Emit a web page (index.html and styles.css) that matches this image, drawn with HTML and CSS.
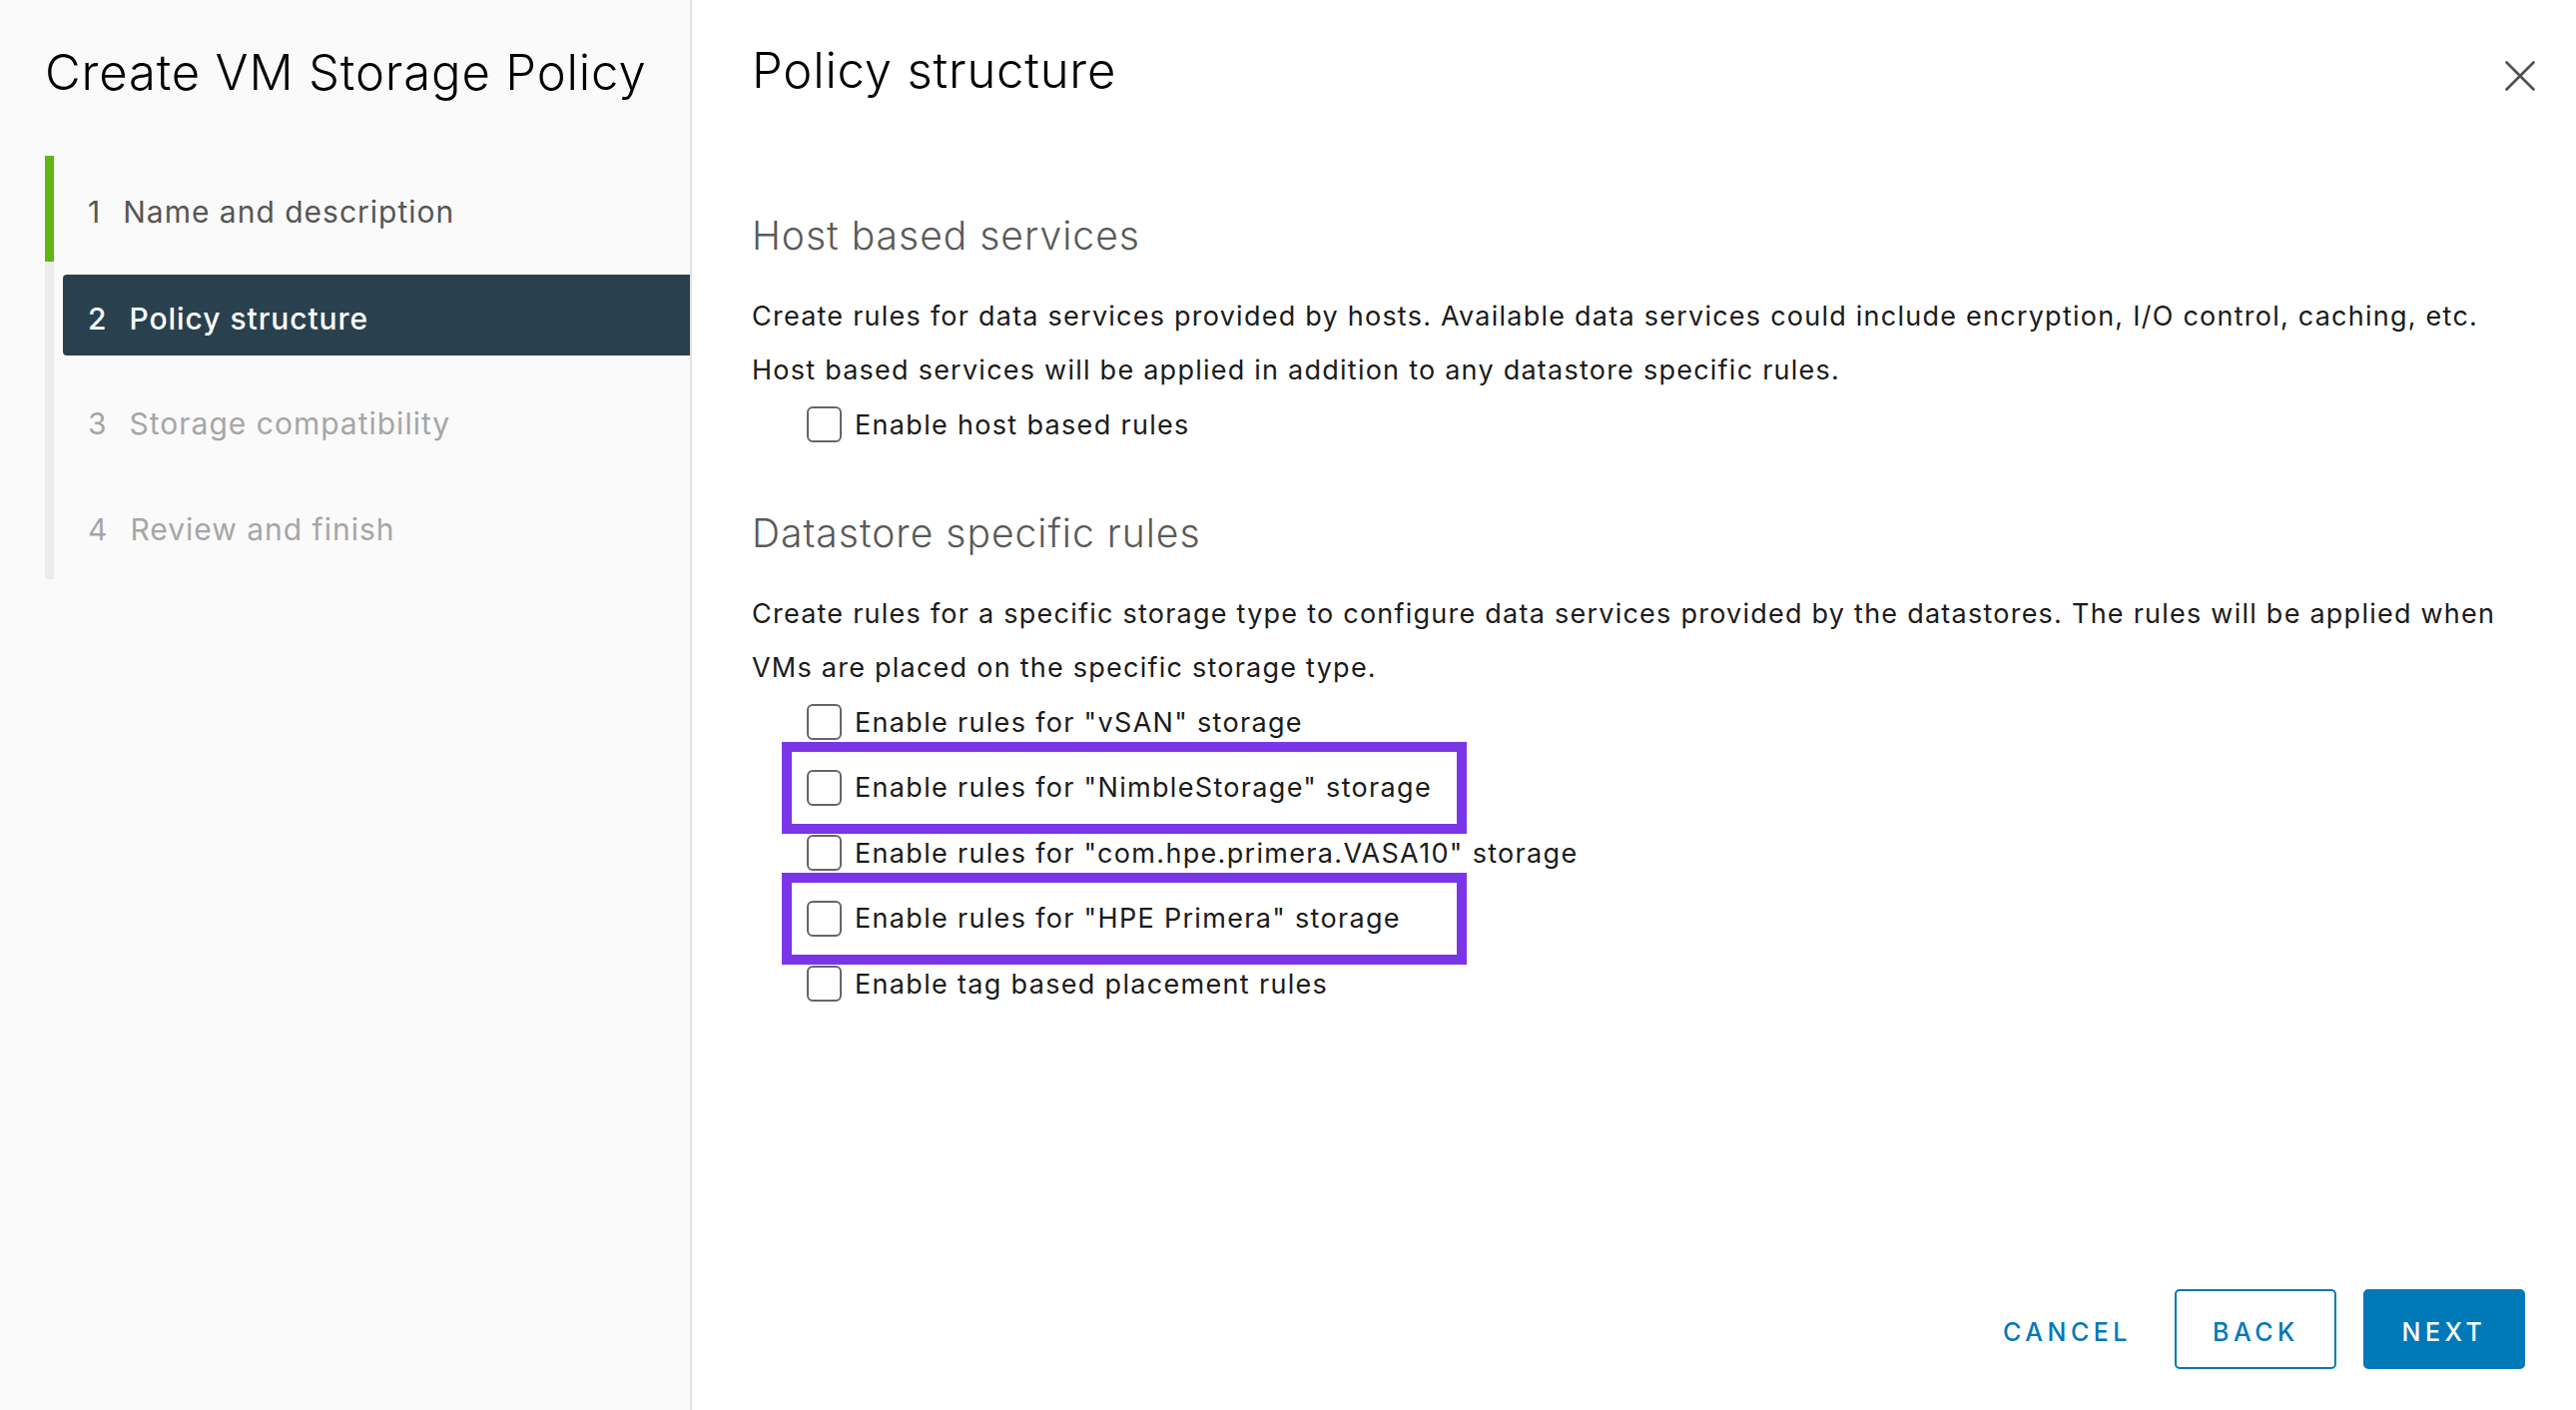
FILE: index.html
```html
<!DOCTYPE html>
<html lang="en">
<head>
<meta charset="utf-8">
<title>Create VM Storage Policy</title>
<link rel="stylesheet" href="styles.css">
</head>
<body>
<div class="wizard">
  <aside class="sidebar">
    <h1 class="wizard-title">Create VM Storage Policy</h1>
    <ol class="steps">
      <li class="step done"><div class="step-btn"><span class="num">1</span>Name and description</div></li>
      <li class="step"><div class="step-btn active"><span class="num">2</span>Policy structure</div></li>
      <li class="step"><div class="step-btn todo"><span class="num">3</span>Storage compatibility</div></li>
      <li class="step"><div class="step-btn todo"><span class="num">4</span>Review and finish</div></li>
    </ol>
  </aside>
  <main class="content">
    <header class="content-header">
      <h2 class="page-title">Policy structure</h2>
      <svg class="close" width="30" height="30" viewBox="0 0 30 30" aria-label="Close">
        <path d="M1.5 1.5 L28.5 28.5 M28.5 1.5 L1.5 28.5" stroke="#4f4f4f" stroke-width="2.6" stroke-linecap="round" fill="none"/>
      </svg>
    </header>

    <section class="section">
      <h3 class="section-title">Host based services</h3>
      <p class="text">Create rules for data services provided by hosts. Available data services could include encryption, I/O control, caching, etc.</p>
      <p class="text">Host based services will be applied in addition to any datastore specific rules.</p>
      <div class="checks">
        <label class="check"><span class="box"></span>Enable host based rules</label>
      </div>
    </section>

    <section class="section section-ds">
      <h3 class="section-title">Datastore specific rules</h3>
      <p class="text">Create rules for a specific storage type to configure data services provided by the datastores. The rules will be applied when VMs are placed on the specific storage type.</p>
      <div class="checks list">
        <label class="check"><span class="box"></span>Enable rules for "vSAN" storage</label>
        <label class="check"><span class="box"></span>Enable rules for "NimbleStorage" storage<span class="highlight"></span></label>
        <label class="check"><span class="box"></span>Enable rules for "com.hpe.primera.VASA10" storage</label>
        <label class="check"><span class="box"></span>Enable rules for "HPE Primera" storage<span class="highlight"></span></label>
        <label class="check"><span class="box"></span>Enable tag based placement rules</label>
      </div>
    </section>

    <footer class="footer">
      <button class="btn btn-link">CANCEL</button>
      <button class="btn btn-outline">BACK</button>
      <button class="btn btn-primary">NEXT</button>
    </footer>
  </main>
</div>
</body>
</html>
```
FILE: styles.css
```css
* { box-sizing: border-box; }
html, body { margin: 0; padding: 0; }
body {
  font-family: "Inter", "Lato", sans-serif;
  color: #1b1b1b;
  background: #ffffff;
}
.wizard {
  display: flex;
  width: 2580px;
  height: 1412px;
  overflow: hidden;
}

/* ---------- sidebar ---------- */
.sidebar {
  width: 693px;
  flex: none;
  background: #fafafa;
  border-right: 2px solid #e2e2e2;
  padding: 43px 0 0 45px;
}
.wizard-title {
  margin: 0;
  font-size: 49px;
  line-height: 60px;
  font-weight: 300;
  letter-spacing: 0.85px;
  color: #000;
}
.steps {
  list-style: none;
  margin: 53px 0 0 0;
  padding: 0;
}
.step {
  height: 106px;
  border-left: 9px solid #ececec;
  padding: 13px 0 12px 9px;
}
.step.done { border-left-color: #60b515; }
.step-btn {
  height: 81px;
  display: flex;
  align-items: center;
  padding: 4px 0 0 25px;
  font-size: 30px;
  letter-spacing: 1px;
  color: #565656;
  border-radius: 4px 0 0 4px;
}
.step-btn .num { margin-right: 22px; }
.step-btn.active {
  background: #29414e;
  color: #ffffff;
  font-weight: 500;
  letter-spacing: 0.95px;
  padding-top: 6px;
}
.step-btn.todo { color: #a6a6a6; }

/* ---------- content ---------- */
.content {
  flex: 1;
  min-width: 0;
  display: flex;
  flex-direction: column;
  padding: 41px 41px 41px 60px;
}
.content-header {
  display: flex;
  justify-content: space-between;
  align-items: flex-start;
  height: 60px;
}
.page-title {
  margin: 0;
  font-size: 49px;
  line-height: 60px;
  font-weight: 300;
  letter-spacing: 0.8px;
  color: #000;
}
.close { margin-top: 20px; flex: none; }

.section-title {
  margin: 111px 0 30px 0;
  font-size: 39px;
  line-height: 48px;
  font-weight: 300;
  letter-spacing: 1px;
  color: #5a5a5a;
}
.section-ds .section-title { margin-top: 58px; }
.text {
  margin: 0;
  font-size: 27px;
  line-height: 54px;
  letter-spacing: 1.24px;
}
.section-ds .text { margin-top: 1px; }

.checks {
  display: flex;
  flex-direction: column;
}
.checks.list { gap: 11.5px; }
.check {
  position: relative;
  display: flex;
  align-items: center;
  height: 54px;
  padding-left: 55px;
  font-size: 27px;
  letter-spacing: 1.32px;
  color: #1b1b1b;
}
.box {
  width: 35px;
  height: 36px;
  border: 2.5px solid #666666;
  border-radius: 6px;
  background: #ffffff;
  margin-right: 13px;
  flex: none;
}
.highlight {
  position: absolute;
  left: 30px;
  top: -19px;
  width: 686px;
  height: 92px;
  border: 10px solid #7a36e6;
  pointer-events: none;
}

/* ---------- footer ---------- */
.footer {
  margin-top: auto;
  display: flex;
  justify-content: flex-end;
  gap: 27px;
  padding-right: 10px;
}
.btn {
  height: 80px;
  padding: 6px 36px 0 36px;
  border: 2px solid transparent;
  border-radius: 5px;
  font-family: "Inter", "Lato", sans-serif;
  font-size: 25px;
  line-height: 70px;
  font-weight: 500;
  letter-spacing: 4.5px;
  background: transparent;
  color: #0079b8;
  cursor: pointer;
}
.btn-link { padding: 6px 14px 0 36px; }
.btn-outline {
  width: 162px;
  border-color: #0079b8;
  background: #ffffff;
}
.btn-primary {
  width: 162px;
  background: #0079b8;
  border-color: #0079b8;
  color: #ffffff;
}
```
